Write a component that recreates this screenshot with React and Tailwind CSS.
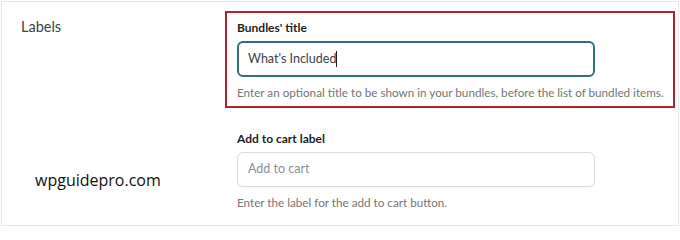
import React from "react";

function Field({ label, help, children }) {
	return (
		<div className="flex flex-col">
			<span className="text-[12px] leading-4 font-bold text-[#1e1e1e] pt-[2px]">{label}</span>
			<div className="mt-[5px]">{children}</div>
			<p className="mt-[7px] text-[11.7px] leading-4 text-[#757575] whitespace-nowrap">{help}</p>
		</div>
	);
}

export default function App() {
	return (
		<div className="w-[680px] h-[228px] bg-white pt-px px-px font-['Lato',sans-serif]">
			<div className="h-[225px] border border-[#e6e8ea] flex">
				<div className="w-[223px] shrink-0 pl-[19px] pt-[12px]">
					<span className="text-[14.5px] leading-5 text-[#3c434a]">Labels</span>
				</div>
				<div className="flex flex-col pt-[9px]">
					<div className="w-[450px] border-2 border-[#b3232c] pl-[10px] pr-2 pt-[5px] pb-[6px]">
						<Field label="Bundles' title" help="Enter an optional title to be shown in your bundles, before the list of bundled items.">
							<div className="w-[358px] h-9 rounded-md border-2 border-[#2f6f7e] flex items-center pl-[9px] text-[12.5px] text-[#3c434a]">
								<span>What's Included</span>
								<span className="w-px h-4 bg-[#1e1e1e]" />
							</div>
						</Field>
					</div>
					<div className="pl-3 pt-[21px]">
						<Field label="Add to cart label" help="Enter the label for the add to cart button.">
							<div className="w-[358px] h-[35px] rounded-md border border-[#dcdcde] shadow-[0_1px_2px_rgba(0,0,0,0.05)] flex items-center pl-[10px] text-[12.5px] text-[#8c8f94]">
								Add to cart
							</div>
						</Field>
					</div>
				</div>
			</div>
			<div className="absolute left-[35px] top-[169px] text-[16px] leading-[22px] text-[#111] font-['Open_Sans',sans-serif]">
				wpguidepro.com
			</div>
		</div>
	);
}
